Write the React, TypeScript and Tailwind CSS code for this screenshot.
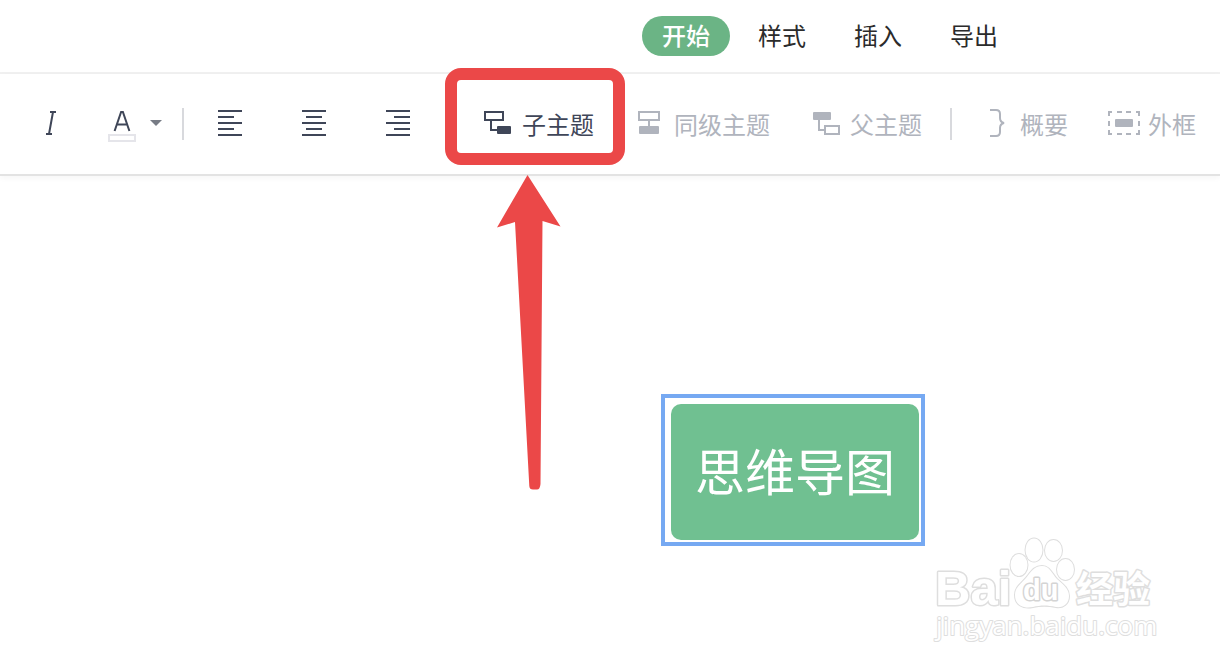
import type { ReactNode } from "react";

const tabs = ["开始", "样式", "插入", "导出"];

function Tab({ label, active }: { label: string; active: boolean }) {
  return (
    <button
      type="button"
      className={
        active
          ? "h-10 rounded-full bg-[#6bb485] px-5 pb-0.5 text-2xl leading-9 font-medium text-white"
          : "h-10 rounded-full px-5 pb-0.5 text-2xl leading-9 text-[#2b2b2b]"
      }
    >
      {label}
    </button>
  );
}

function Divider() {
  return <div className="h-8 w-0.5 shrink-0 bg-[#d8d9dd]" />;
}

function AlignIcon({ offset }: { offset: number }) {
  return (
    <svg width="24" height="32" viewBox="0 0 24 32" fill="currentColor" aria-hidden="true">
      <rect x="0" y="2" width="24" height="2" />
      <rect x={offset} y="8" width="16" height="2" />
      <rect x="0" y="14" width="24" height="2" />
      <rect x={offset} y="20" width="16" height="2" />
      <rect x="0" y="26" width="24" height="2" />
    </svg>
  );
}

function TextTool({
  icon,
  label,
  gap,
  muted = true,
}: {
  icon: ReactNode;
  label: string;
  gap: string;
  muted?: boolean;
}) {
  return (
    <button
      type="button"
      className={`flex shrink-0 items-center whitespace-nowrap text-2xl leading-8 ${gap} ${
        muted ? "text-[#b0b4bd]" : "text-[#3f4658]"
      }`}
    >
      {icon}
      <span>{label}</span>
    </button>
  );
}

function Toolbar() {
  return (
    <div
      role="toolbar"
      aria-label="开始"
      className="relative flex h-[102px] items-center border-b-2 border-[#e3e3e3] pl-[34px] text-[#3f4658] shadow-[0_2px_6px_rgba(0,0,0,0.04)]"
    >
      <button type="button" aria-label="斜体" className="shrink-0">
        <svg width="32" height="32" viewBox="0 0 32 32" fill="none" stroke="currentColor" strokeWidth="2">
          <path d="M16 4H22M12 26H18M19 4L15 26" />
        </svg>
      </button>
      <button type="button" aria-label="文字颜色" className="ml-[42px] flex shrink-0 items-center gap-3.5">
        <svg width="28" height="32" viewBox="0 0 28 32" fill="none" className="overflow-visible">
          <path d="M6.6 23L13.1 4H14.9L21.4 23M8.8 16.5H19.2" stroke="currentColor" strokeWidth="2" />
          <rect x="1" y="27" width="26" height="6" stroke="#e5e5ea" strokeWidth="2" />
        </svg>
        <svg width="12" height="32" viewBox="0 0 12 32" fill="#777c85">
          <path d="M0 12H12L6 18Z" />
        </svg>
      </button>
      <div className="ml-5 shrink-0">
        <Divider />
      </div>
      <div className="ml-[34px] flex shrink-0 gap-[60px]">
        <button type="button" aria-label="左对齐">
          <AlignIcon offset={0} />
        </button>
        <button type="button" aria-label="居中对齐">
          <AlignIcon offset={4} />
        </button>
        <button type="button" aria-label="右对齐">
          <AlignIcon offset={8} />
        </button>
      </div>
      <div className="relative ml-[74px] flex shrink-0">
        <TextTool
          label="子主题"
          gap="gap-2.5"
          muted={false}
          icon={
            <svg width="28" height="32" viewBox="0 0 28 32" fill="none" stroke="currentColor" strokeWidth="2">
              <rect x="1" y="4" width="18" height="8" />
              <path d="M7 12V22H14" />
              <rect x="13" y="18" width="14" height="8" rx="1" fill="currentColor" stroke="none" />
            </svg>
          }
        />
        <div className="pointer-events-none absolute -top-10 right-[-31px] left-[-39px] h-[97px] rounded-2xl border-12 border-[#eb4848]" />
      </div>
      <div className="ml-11 flex shrink-0 gap-[42px]">
        <TextTool
          label="同级主题"
          gap="gap-3"
          icon={
            <svg width="24" height="32" viewBox="0 0 24 32" fill="none" stroke="currentColor" strokeWidth="2">
              <rect x="1" y="4" width="20" height="8" />
              <path d="M11 12V18" />
              <rect x="1" y="18" width="20" height="8" rx="1" fill="currentColor" stroke="none" />
            </svg>
          }
        />
        <TextTool
          label="父主题"
          gap="gap-2.5"
          icon={
            <svg width="28" height="32" viewBox="0 0 28 32" fill="none" stroke="currentColor" strokeWidth="2">
              <rect x="1" y="4" width="18" height="8" rx="1" fill="currentColor" stroke="none" />
              <path d="M7 12V22H13" />
              <rect x="13" y="18" width="14" height="8" />
            </svg>
          }
        />
      </div>
      <div className="ml-7 shrink-0">
        <Divider />
      </div>
      <div className="ml-9 flex shrink-0 gap-10">
        <TextTool
          label="概要"
          gap="gap-3"
          icon={
            <svg width="20" height="32" viewBox="0 0 20 32" fill="none" stroke="currentColor" strokeWidth="2">
              <path d="M2 2H8Q12 2 12 6V10Q12 14 16 15Q12 16 12 20V24Q12 28 8 28H2" />
            </svg>
          }
        />
        <TextTool
          label="外框"
          gap="gap-2"
          icon={
            <svg width="32" height="32" viewBox="0 0 32 32" fill="none" stroke="currentColor" strokeWidth="2">
              <path d="M1 8V4H4M9 4H14M18 4H23M28 4H31V8M31 13V18M31 22V26H28M23 26H18M14 26H9M4 26H1V22M1 18V13" />
              <rect x="7" y="11" width="18" height="8" rx="1" fill="currentColor" stroke="none" />
            </svg>
          }
        />
      </div>
    </div>
  );
}

function Watermark() {
  return (
    <svg
      width="228"
      height="116"
      viewBox="930 532 228 116"
      fill="#fff"
      stroke="#dedede"
      strokeWidth="3"
      paintOrder="stroke"
      strokeLinejoin="round"
      className="absolute right-[62px] bottom-5 overflow-visible"
    >
      <text x="935" y="605" fontSize="49" fontWeight="700" className="font-['Liberation_Sans',sans-serif]">
        Bai
      </text>
      <g strokeWidth="2">
        <ellipse cx="1034" cy="550" rx="8.5" ry="11.5" />
        <ellipse cx="1053.5" cy="550.5" rx="8.5" ry="10.5" />
        <ellipse cx="1019" cy="565" rx="8.5" ry="11" />
        <ellipse cx="1065.5" cy="569.5" rx="8.5" ry="10.5" />
        <path d="M1042 566C1050 566 1052 574 1057 579C1064 585 1069 589 1069 596C1069 604 1063 608 1056 607C1047 605 1041 605 1033 607C1023 609 1015 605 1015 595C1015 587 1021 584 1026 578C1031 572 1034 566 1042 566Z" />
      </g>
      <text
        x="1023"
        y="600"
        fontSize="29"
        fontWeight="700"
        stroke="#d4d4d4"
        className="font-['Liberation_Sans',sans-serif]"
      >
        du
      </text>
      <text x="1076" y="603" fontSize="37" fontWeight="700" className="font-['Noto_Sans_CJK_SC',sans-serif]">
        经验
      </text>
      <text x="936" y="635" fontSize="26" strokeWidth="2" className="font-['Open_Sans',sans-serif]">
        jingyan.baidu.com
      </text>
    </svg>
  );
}

export default function App() {
  return (
    <div className="flex min-h-screen flex-col overflow-x-hidden bg-white font-['Noto_Sans_CJK_SC',sans-serif]">
      <header className="border-b-2 border-[#f1f1f1] py-4 pl-[642px]">
        <nav className="flex gap-2">
          {tabs.map((label, index) => (
            <Tab key={label} label={label} active={index === 0} />
          ))}
        </nav>
      </header>
      <Toolbar />
      <main className="relative flex-1">
        <svg
          width="68"
          height="318"
          viewBox="0 0 68 318"
          fill="#eb4848"
          className="absolute -top-1 left-[494px]"
          aria-hidden="true"
        >
          <path d="M33.5 3L66.5 54.5L48.5 49L46.5 312Q46 317.5 43 317.5H39Q35.5 317.5 35.3 314L21 50L3 55.5Z" />
        </svg>
        <div className="absolute top-[218px] left-[661px] border-4 border-[#76a9f2] pt-1.5 pr-0.5 pb-0.5 pl-1.5">
          <div className="h-[136px] rounded-[10px] bg-[#70c091] px-6 text-[50px] leading-[130px] whitespace-nowrap text-white">
            思维导图
          </div>
        </div>
        <Watermark />
      </main>
    </div>
  );
}
